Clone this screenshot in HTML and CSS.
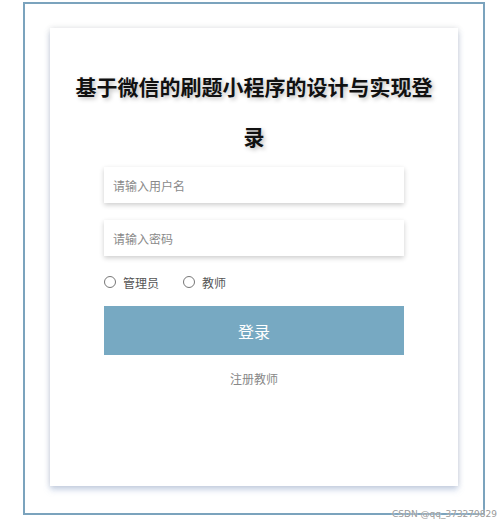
FILE: index.html
```html
<!DOCTYPE html>
<html lang="zh-CN">
<head>
  <meta charset="UTF-8" />
  <meta name="viewport" content="width=device-width, initial-scale=1" />
  <title>登录</title>
  <link rel="stylesheet" href="styles.css">
</head>
<body>
  <div class="frame">
    <div class="login-card">
      <h1 class="login-title">基于微信的刷题小程序的设计与实现登录</h1>

      <div class="login-form">
        <input type="text" class="field" placeholder="请输入用户名" />
        <input type="password" class="field" placeholder="请输入密码" />

        <div class="roles">
          <label class="role"><span class="radio"></span>管理员</label>
          <label class="role"><span class="radio"></span>教师</label>
        </div>

        <button class="login-btn">登录</button>
        <a class="register" href="#">注册教师</a>
      </div>
    </div>
  </div>

  <span class="watermark">CSDN @qq_373279829</span>
</body>
</html>
```

FILE: styles.css
```css
body {
  margin: 0;
  padding: 2px 0 0 23px;
  font-family: "Noto Sans CJK SC", "Noto Sans", sans-serif;
  background: #fff;
  color: #333;
}

.frame {
  box-sizing: border-box;
  width: 462px;
  height: 513px;
  border: 2px solid #7ba3bd;
  padding: 24px 25px 0;
}

.login-card {
  box-sizing: border-box;
  width: 408px;
  height: 458px;
  background: #fff;
  padding-top: 33px;
  box-shadow: 0 0 6px rgba(0, 0, 0, 0.12), 0 4px 6px rgba(120, 150, 200, 0.35);
}

.login-title {
  margin: 0 auto;
  width: 370px;
  text-align: center;
  font-size: 21px;
  line-height: 50px;
  font-weight: 700;
  color: #111;
  text-shadow: 2px 2px 4px rgba(0, 0, 0, 0.25);
}

.login-form {
  width: 300px;
  margin: 6px auto 0;
  display: flex;
  flex-direction: column;
}

.field {
  box-sizing: border-box;
  height: 36px;
  border: none;
  padding: 0 9px;
  margin-bottom: 17px;
  font-family: inherit;
  font-size: 12px;
  background: #fff;
  box-shadow: 0 2px 5px rgba(0, 0, 0, 0.2);
}

.field::placeholder {
  color: #8a8a8a;
}

.roles {
  display: flex;
  gap: 24px;
  height: 20px;
  align-items: center;
  margin: -1px 0 14px;
}

.role {
  display: flex;
  align-items: center;
  gap: 7px;
  font-size: 12px;
  color: #555;
}

.radio {
  box-sizing: border-box;
  width: 12px;
  height: 12px;
  border: 1px solid #777;
  border-radius: 50%;
}

.login-btn {
  height: 49px;
  border: none;
  background: #77a9c2;
  color: #fff;
  font-family: inherit;
  font-size: 16px;
  cursor: pointer;
}

.register {
  margin-top: 15px;
  text-align: center;
  font-size: 12px;
  color: #888;
  text-decoration: none;
}

.watermark {
  position: absolute;
  left: 392px;
  top: 509px;
  font-family: "DejaVu Sans", sans-serif;
  font-size: 9px;
  color: #999;
  text-shadow: 0 0 2px #fff;
}
```
